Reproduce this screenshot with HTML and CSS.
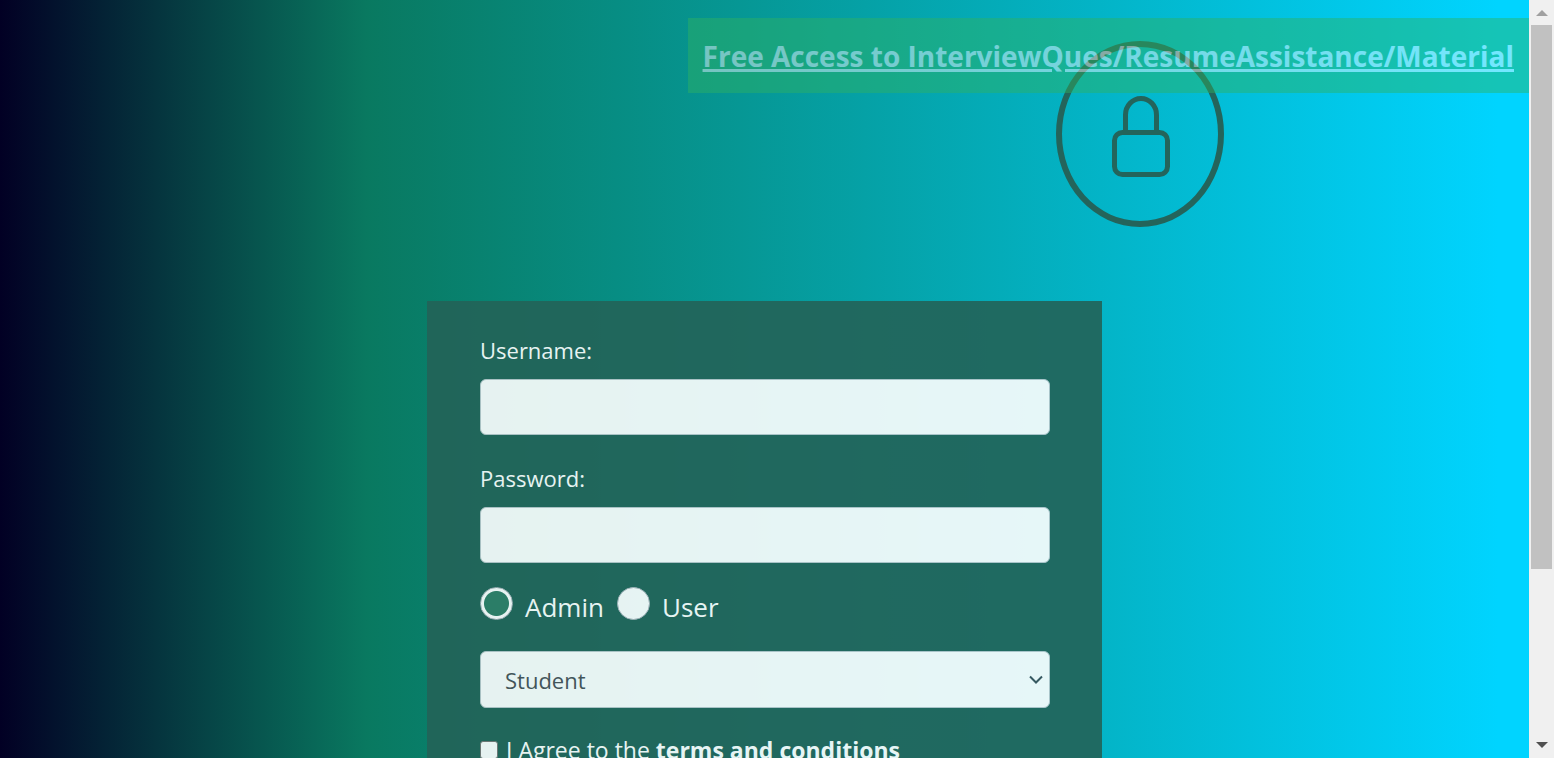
FILE: index.html
```
<!DOCTYPE html>
<html lang="en">
<head>
<meta charset="utf-8">
<title>Login</title>
<link rel="stylesheet" href="styles.css">
</head>
<body>
<div class="page">
  <header class="hero">
    <div class="badge">
      <svg class="lock" viewBox="0 0 58 82" width="58" height="82" fill="none" stroke="currentColor" stroke-width="5" aria-hidden="true">
        <path d="M13.500 36V19a15.500 16.500 0 0 1 31 0v17"/>
        <rect x="2.500" y="36.500" width="53" height="42" rx="8"/>
      </svg>
    </div>
    <div class="banner"><a class="banner-link" href="#">Free Access to InterviewQues/ResumeAssistance/Material</a></div>
  </header>
  <form class="panel">
    <div class="field">
      <label class="label" for="username">Username:</label>
      <input class="control" id="username" type="text">
    </div>
    <div class="field">
      <label class="label" for="password">Password:</label>
      <input class="control" id="password" type="password">
    </div>
    <div class="roles">
      <input class="radio" id="admin" type="radio" name="role" checked>
      <label class="role" for="admin">Admin</label>
      <input class="radio" id="user" type="radio" name="role">
      <label class="role" for="user">User</label>
    </div>
    <div class="select-wrap">
      <select class="control select" aria-label="Account type"><option>Student</option></select>
      <svg class="chevron" viewBox="0 0 14 9" width="14" height="9" fill="none" stroke="currentColor" stroke-width="2" aria-hidden="true"><path d="M1 1.500l6 6 6-6"/></svg>
    </div>
    <div class="agree">
      <input class="check" id="agree" type="checkbox">
      <label class="agree-label" for="agree">I Agree to the <b>terms and conditions</b></label>
    </div>
  </form>
</div>
<div class="scrollbar" aria-hidden="true">
  <svg class="arrow arrow-up" viewBox="0 0 12 6" width="12" height="6"><path d="M0 6L6 0l6 6z"/></svg>
  <div class="track"><div class="thumb"></div></div>
  <svg class="arrow" viewBox="0 0 12 6" width="12" height="6"><path d="M0 0l6 6 6-6z"/></svg>
</div>
</body>
</html>
```
FILE: styles.css
```
* { box-sizing: border-box; }

body {
  margin: 0;
  height: 100vh;
  display: flex;
  overflow: hidden;
  font-family: "Open Sans", "Noto Sans", sans-serif;
}

.page {
  flex: 1;
  min-width: 0;
  overflow: hidden;
  background: linear-gradient(90deg, #020024 0%, #097960 24%, #00d4ff 98%);
}

/* The banner and the badge share one grid cell so the banner lies over the ring. */
.hero {
  display: grid;
  padding-top: 18px;
  margin-bottom: 74px;
}

.banner, .badge { grid-area: 1 / 1; }

.banner {
  justify-self: end;
  align-self: start;
  padding: 16px 15px 14px;
  background: #2fb261;
  opacity: 0.45;
}

.banner-link {
  display: block;
  color: #fff;
  font-size: 28px;
  font-weight: 700;
  line-height: 45px;
  white-space: nowrap;
  text-decoration: underline;
  text-decoration-thickness: 3px;
}

.badge {
  justify-self: end;
  margin: 23px 305px 0 0;
  width: 168px;
  height: 186px;
  display: flex;
  justify-content: center;
  align-items: center;
  padding: 6px 0 0 2px;
  border: 6px solid #24645b;
  border-radius: 50%;
  color: #24645b;
}

.panel {
  width: 675px;
  max-width: 100%;
  margin: 0 auto;
  padding: 31px 52px 32px 53px;
  background: #236358;
  opacity: 0.9;
  color: #fff;
}

.field { margin-bottom: 25px; }

.label {
  display: block;
  margin-bottom: 11px;
  font-size: 22px;
  line-height: 36px;
}

.control {
  display: block;
  width: 100%;
  height: 56px;
  padding: 0 24px;
  border: 1px solid #bac8cc;
  border-radius: 6px;
  background: #fff;
  color: #495057;
  font: inherit;
  font-size: 22px;
}

.roles {
  display: flex;
  align-items: center;
  height: 36px;
  margin: -3px 0 30px;
}

.radio {
  appearance: none;
  width: 33px;
  height: 33px;
  margin: 0;
  border: 1px solid #adb5bd;
  border-radius: 50%;
  background: #fff;
}

.radio:checked { background: radial-gradient(circle, #2f7d66 12px, #fff 13px); }

.role {
  margin: 8px 13px 0 12px;
  font-size: 26px;
  line-height: 36px;
}

.select-wrap { position: relative; }

.select {
  appearance: none;
  height: 57px;
  padding-top: 1px;
}

.chevron {
  position: absolute;
  right: 7px;
  top: 24px;
  color: #3c5058;
  pointer-events: none;
}

.agree {
  display: flex;
  align-items: center;
  gap: 8px;
  margin-top: 24px;
}

.check {
  appearance: none;
  width: 18px;
  height: 18px;
  margin: 0;
  border: 1px solid #767676;
  border-radius: 3px;
  background: #fff;
}

.agree-label {
  font-size: 23px;
  line-height: 36px;
}

.scrollbar {
  width: 25px;
  display: flex;
  flex-direction: column;
  align-items: center;
  padding: 10px 2px;
  background: #f0f0f0;
}

.arrow { flex: none; fill: #505050; }
.arrow-up { fill: #a0a0a0; }

.track {
  flex: 1;
  width: 100%;
  padding: 9px 0 19px;
}

.thumb {
  height: 78%;
  background: #c1c1c1;
}
```
